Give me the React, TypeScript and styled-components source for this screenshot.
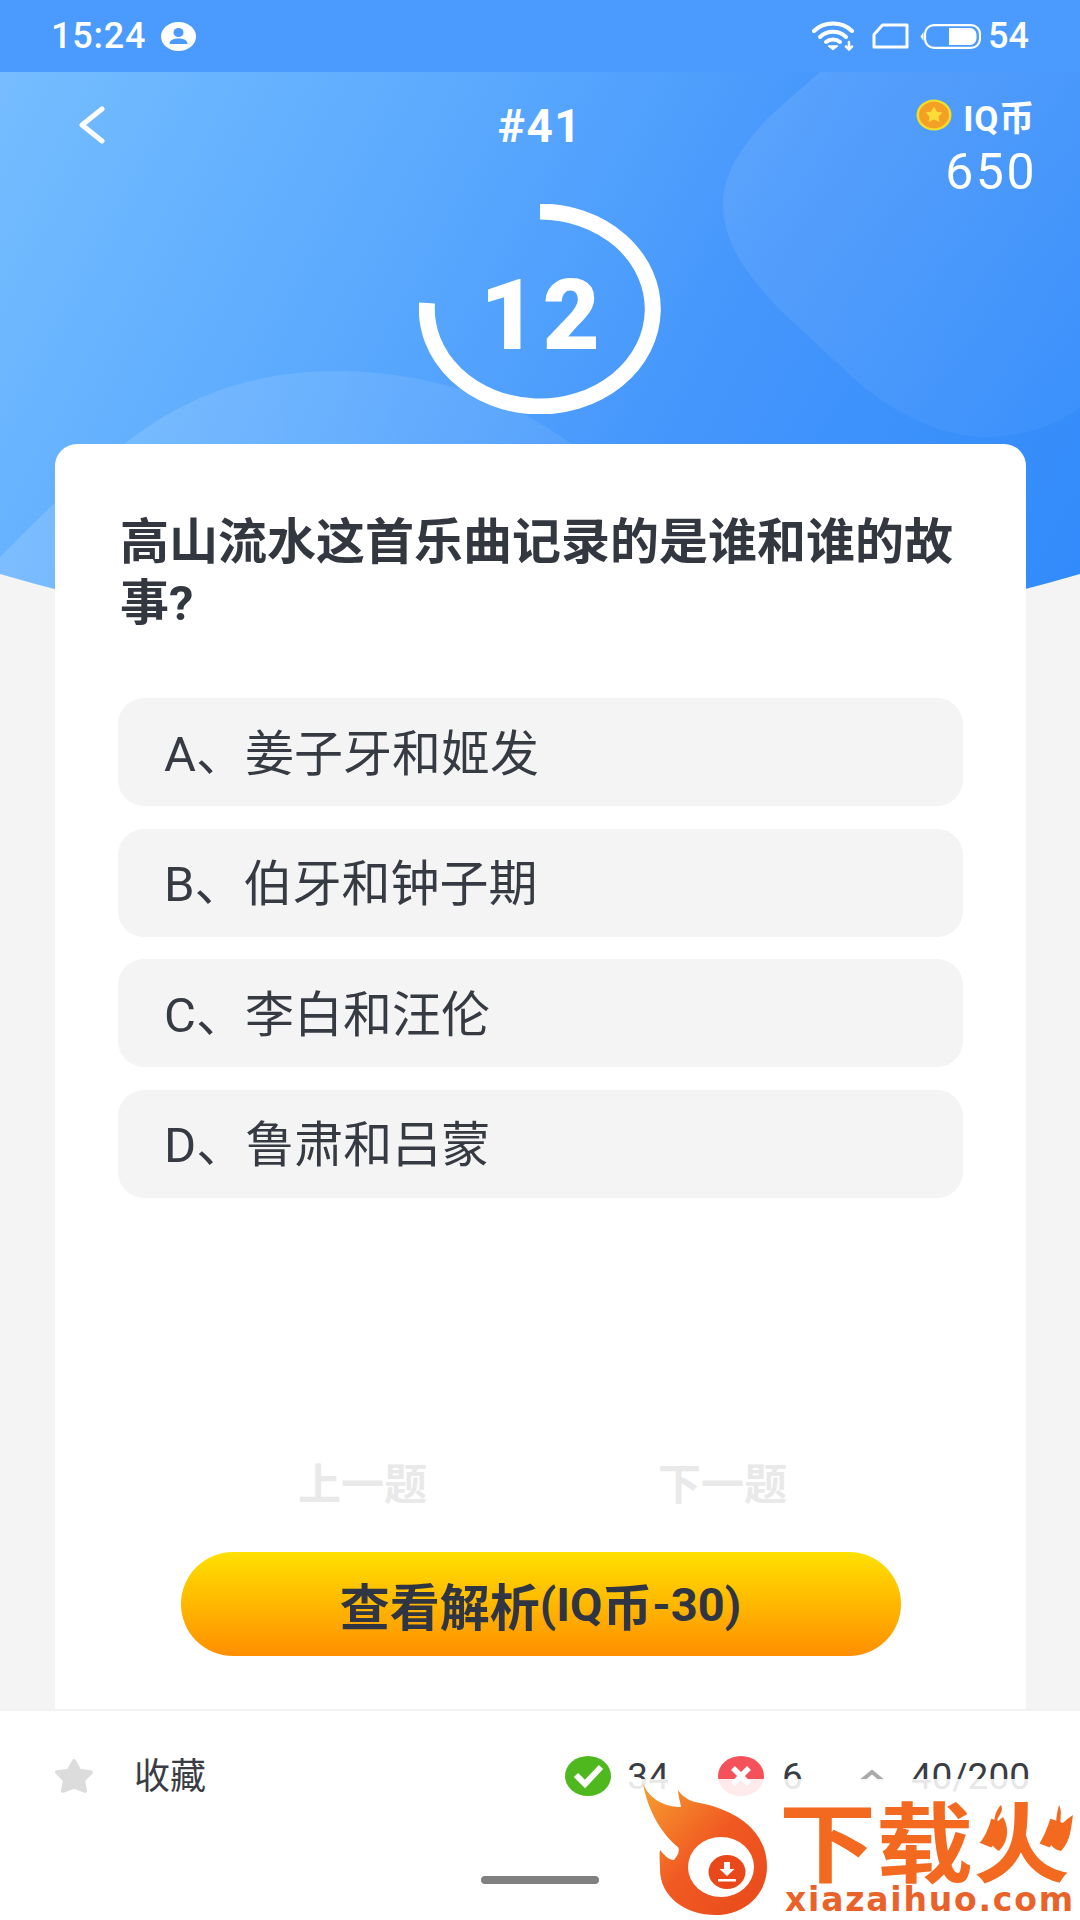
import * as React from 'react'
import styled, { createGlobalStyle } from 'styled-components'

const GlobalStyle = createGlobalStyle`
  html, body {
    margin: 0;
    padding: 0;
    background: #f4f4f4;
  }
  * {
    box-sizing: border-box;
  }
`

const fontStack = `Roboto, "Noto Sans CJK SC", sans-serif`

const Page = styled.div`
  position: relative;
  width: 1080px;
  height: 1920px;
  overflow: hidden;
  display: flex;
  flex-direction: column;
  background: #f4f4f4;
  font-family: ${fontStack};
  color: #333740;
`

const Backdrop = styled.div`
  position: absolute;
  top: 72px;
  left: 0;
  width: 1080px;
  height: 590px;
  background: linear-gradient(118deg, #75bdff 0%, #5aa9fe 35%, #4596fc 62%, #308afa 100%);
  clip-path: path('M0 0H1080V502Q540 659 0 502Z');
`

const BlobLayer = styled.svg`
  display: block;
`

const StatusBar = styled.div`
  position: relative;
  height: 72px;
  flex: none;
  display: flex;
  align-items: center;
  justify-content: space-between;
  padding: 0 51px 0 51px;
  background: #4a9bfd;
  color: #fff;
`

const StatusGroup = styled.div`
  display: flex;
  align-items: center;
`

const Clock = styled.span`
  font-size: 36px;
  font-weight: 500;
  letter-spacing: 0.8px;
  margin-right: 15px;
`

const BatteryLevel = styled.span`
  font-size: 36px;
  font-weight: 500;
  margin-left: 7px;
`

const Hero = styled.div`
  position: relative;
  height: 372px;
  flex: none;
  display: flex;
  flex-direction: column;
  align-items: center;
`

const NavRow = styled.div`
  width: 100%;
  height: 132px;
  flex: none;
  display: grid;
  grid-template-columns: 1fr auto 1fr;
  padding: 0 45px;
  color: #fff;
`

const BackIcon = styled.svg`
  margin: 34px 0 0 33px;
`

const IssueNumber = styled.div`
  margin-top: 29px;
  font-size: 46px;
  line-height: 50px;
  font-weight: 700;
  letter-spacing: 1.5px;
`

const Wallet = styled.div`
  display: flex;
  flex-direction: column;
  align-items: flex-end;
  padding-top: 26px;
`

const WalletLabel = styled.div`
  display: flex;
  align-items: center;
  gap: 11px;
  height: 34px;
  font-size: 35px;
  font-weight: 700;
  letter-spacing: 0.8px;
`

const WalletValue = styled.div`
  margin-top: 17px;
  font-size: 50px;
  line-height: 46px;
  letter-spacing: 2.5px;
  margin-right: -2px;
`

const Timer = styled.div`
  position: relative;
  width: 242px;
  height: 210px;
  flex: none;
`

const TimerValue = styled.div`
  position: absolute;
  inset: 0;
  display: flex;
  align-items: center;
  justify-content: center;
  padding: 11px 0 0 5px;
  color: #fff;
  font-size: 99px;
  font-weight: 900;
  letter-spacing: 5px;
`

const Card = styled.div`
  position: relative;
  flex: 1;
  margin: 0 54px 0 55px;
  padding: 68px 63px 53px 63px;
  display: flex;
  flex-direction: column;
  background: #fff;
  border-radius: 22px 22px 0 0;
`

const Question = styled.div`
  padding: 0 0 0 2px;
  font-size: 49px;
  line-height: 61px;
  font-weight: 700;
  color: #333740;
`

const Options = styled.div`
  margin-top: 64px;
  display: flex;
  flex-direction: column;
  gap: 22.5px;
`

const Option = styled.div`
  height: 108px;
  display: flex;
  align-items: center;
  padding: 0 0 6px 46px;
  background: #f4f4f5;
  border-radius: 26px;
  font-size: 49px;
  color: #363a42;
`

const PagerRow = styled.div`
  margin-top: auto;
  margin-bottom: 37px;
  display: flex;
  justify-content: center;
  gap: 231px;
  padding-left: 4px;
`

const PagerLabel = styled.span`
  font-size: 43px;
  line-height: 60px;
  font-weight: 700;
  color: #e9e9e9;
`

const HintButton = styled.div`
  align-self: center;
  width: 720px;
  height: 104px;
  display: flex;
  align-items: center;
  justify-content: center;
  border-radius: 52px;
  background: linear-gradient(180deg, #ffe001 0%, #ff8f00 100%);
  color: #2f3542;
  font-size: 47px;
  font-weight: 700;
`

const HintCjk = styled.span`
  font-size: 50px;
`

const BottomBar = styled.div`
  flex: none;
  height: 211px;
  padding-top: 45px;
  background: #fff;
  border-top: 2px solid #f2f2f2;
  display: flex;
  flex-direction: column;
`

const StatsRow = styled.div`
  height: 40px;
  display: flex;
  align-items: center;
  padding: 0 50px 0 53px;
  font-size: 37px;
`

const FavLabel = styled.span`
  margin: 0 auto 6px 39px;
  font-size: 36px;
  color: #3a3d44;
`

const StatItem = styled.div<{ $gap: number; $left: number }>`
  display: flex;
  align-items: center;
  gap: ${p => p.$gap}px;
  margin-left: ${p => p.$left}px;
  color: #3a3d44;
`

const HomeIndicator = styled.div`
  align-self: center;
  width: 118px;
  height: 8px;
  margin-top: 80px;
  border-radius: 4px;
  background: #808080;
`

const Watermark = styled.div`
  position: absolute;
  right: 0;
  bottom: 0;
  width: 452px;
  height: 141px;
  display: flex;
  background: rgba(255, 255, 255, 0.88);
`

const FlameLogo = styled.svg`
  flex: none;
  margin-left: 12px;
`

const Brand = styled.div`
  position: relative;
  margin-left: 9px;
  display: flex;
  flex-direction: column;
  color: #f2691f;
`

const BrandName = styled.div`
  height: 106px;
  font-family: "Noto Sans CJK SC", sans-serif;
  font-size: 97px;
  line-height: 106px;
  font-weight: 700;
  white-space: nowrap;
  transform: translateY(5px) scaleY(0.9);
  transform-origin: center 66px;
`

const BrandUrl = styled.div`
  margin: 3px 0 0 6px;
  font-family: "DejaVu Sans", sans-serif;
  font-size: 33px;
  line-height: 24px;
  font-weight: 700;
  letter-spacing: 1.8px;
  color: #e9622a;
  white-space: nowrap;
`

const BrandFlame = styled.svg<{ $left: number }>`
  position: absolute;
  top: 26px;
  left: ${p => p.$left}px;
`

const options = ['A、姜子牙和姬发', 'B、伯牙和钟子期', 'C、李白和汪伦', 'D、鲁肃和吕蒙']

export default function App() {
  return (
    <Page>
      <GlobalStyle />
      <Backdrop>
        <BlobLayer width="1080" height="590" viewBox="0 0 1080 590">
          <defs>
            <linearGradient id="blobRight" x1="0" y1="0" x2="1" y2="1">
              <stop offset="0" stopColor="#fff" stopOpacity="0.1" />
              <stop offset="1" stopColor="#fff" stopOpacity="0.03" />
            </linearGradient>
            <linearGradient id="blobLeft" x1="0" y1="0" x2="1" y2="0">
              <stop offset="0" stopColor="#fff" stopOpacity="0.14" />
              <stop offset="1" stopColor="#fff" stopOpacity="0.07" />
            </linearGradient>
          </defs>
          <path
            d="M820 0L770 44C740 75 722 105 723 133C724 175 750 205 778 236L860 312C900 345 945 365 985 365C1025 365 1060 352 1080 335V0Z"
            fill="url(#blobRight)"
          />
          <path
            d="M0 485C45 440 85 400 124 372C190 320 260 299 337 299C420 299 510 325 571 372L600 502L0 540Z"
            fill="url(#blobLeft)"
          />
        </BlobLayer>
      </Backdrop>

      <StatusBar>
        <StatusGroup>
          <Clock>15:24</Clock>
          <svg width="35" height="29" viewBox="0 0 35 29">
            <ellipse cx="17.5" cy="14.5" rx="17.5" ry="14.5" fill="#fff" />
            <ellipse cx="17.5" cy="10.5" rx="5" ry="4.5" fill="#4a9bfd" />
            <path d="M8.5 22c0-4 4-5.5 9-5.5s9 1.5 9 5.5z" fill="#4a9bfd" />
          </svg>
        </StatusGroup>
        <StatusGroup>
          <svg width="44" height="30" viewBox="0 0 44 30" fill="none" stroke="#fff" strokeWidth="4" strokeLinecap="round">
            <path d="M2 10C12 0 30 0 40 10" />
            <path d="M8 16C15 9 27 9 34 16" />
            <path d="M14 21C18 17.500 24 17.500 28 21" />
            <path d="M16.500 25L21 28.500L25.500 25Z" fill="#fff" strokeWidth="1.500" strokeLinejoin="round" />
            <path d="M37 21V28M34 25.500L37 28.500L40 25.500" strokeWidth="2.500" />
          </svg>
          <svg width="37" height="26" viewBox="0 0 37 26" fill="none" style={{ marginLeft: 16 }}>
            <path d="M10.500 2H35V24H2V11.500Z" stroke="#fff" strokeWidth="3" strokeLinejoin="round" />
          </svg>
          <svg width="61" height="25" viewBox="0 0 61 25" fill="none" style={{ marginLeft: 11 }}>
            <rect x="5" y="1.200" width="55" height="22.600" rx="9" stroke="#fff" strokeWidth="2.200" />
            <path d="M0.500 12.500L3.500 8V17Z" fill="#fff" />
            <path d="M29 4H50A6.500 6.500 0 0 1 56.500 10.500V14.500A6.500 6.500 0 0 1 50 21H29Z" fill="#fff" />
          </svg>
          <BatteryLevel>54</BatteryLevel>
        </StatusGroup>
      </StatusBar>

      <Hero>
        <NavRow>
          <BackIcon width="28" height="38" viewBox="0 0 28 38" fill="none">
            <path d="M24 3L4 19L24 35" stroke="#fff" strokeWidth="5" strokeLinecap="round" strokeLinejoin="round" />
          </BackIcon>
          <IssueNumber>#41</IssueNumber>
          <Wallet>
            <WalletLabel>
              <svg width="36" height="32" viewBox="0 0 36 32">
                <ellipse cx="18" cy="16" rx="17.500" ry="15.500" fill="#f3dd2b" />
                <ellipse cx="18" cy="16" rx="15" ry="13.200" fill="#f4a024" />
                <path d="M18 7.500L21 12.800L26.500 13.600L22.500 17.500L23.500 23L18 20.500L12.500 23L13.500 17.500L9.500 13.600L15 12.800Z" fill="#fbdc3a" strokeLinejoin="round" />
              </svg>
              <span>IQ币</span>
            </WalletLabel>
            <WalletValue>650</WalletValue>
          </Wallet>
        </NavRow>
        <Timer>
          <svg width="242" height="210" viewBox="0 0 242 210" fill="none">
            <path d="M121 7.500A113 97.500 0 1 1 8 99" stroke="#fff" strokeWidth="16" />
          </svg>
          <TimerValue>12</TimerValue>
        </Timer>
      </Hero>

      <Card>
        <Question>高山流水这首乐曲记录的是谁和谁的故事?</Question>
        <Options>
          {options.map(text => (
            <Option key={text}>{text}</Option>
          ))}
        </Options>
        <PagerRow>
          <PagerLabel>上一题</PagerLabel>
          <PagerLabel>下一题</PagerLabel>
        </PagerRow>
        <HintButton>
          <HintCjk>查看解析</HintCjk>(IQ<HintCjk>币</HintCjk>-30)
        </HintButton>
      </Card>

      <BottomBar>
        <StatsRow>
          <svg width="42" height="36" viewBox="0 0 40 34">
            <path d="M20 3L25 12L36 13.500L28.500 21L30.500 31L20 27L9.500 31L11.500 21L4 13.500L15 12Z" fill="#dcdcdc" stroke="#dcdcdc" strokeWidth="4" strokeLinejoin="round" />
          </svg>
          <FavLabel>收藏</FavLabel>
          <StatItem $gap={16} $left={0}>
            <svg width="46" height="40" viewBox="0 0 46 40">
              <ellipse cx="23" cy="20" rx="23" ry="20" fill="#4fb81f" />
              <path d="M11 19L20 28L36 11" fill="none" stroke="#fff" strokeWidth="6" />
            </svg>
            <span>34</span>
          </StatItem>
          <StatItem $gap={18} $left={49}>
            <svg width="46" height="40" viewBox="0 0 46 40">
              <ellipse cx="23" cy="20" rx="23" ry="20" fill="#f5515a" />
              <path d="M15 12L31 28M31 12L15 28" fill="none" stroke="#fff" strokeWidth="5.500" />
            </svg>
            <span>6</span>
          </StatItem>
          <StatItem $gap={26} $left={56}>
            <svg width="26" height="14" viewBox="0 0 26 14">
              <path d="M2 12L13 3L24 12" fill="none" stroke="#aaa" strokeWidth="4" />
            </svg>
            <span>40/200</span>
          </StatItem>
        </StatsRow>
        <HomeIndicator />
      </BottomBar>

      <Watermark>
        <FlameLogo width="130" height="141" viewBox="0 0 130 141">
          <defs>
            <linearGradient id="flame" x1="0" y1="0" x2="1" y2="1">
              <stop offset="0" stopColor="#f7a030" />
              <stop offset="0.5" stopColor="#f05a22" />
              <stop offset="1" stopColor="#e9481b" />
            </linearGradient>
          </defs>
          <path
            d="M3 4C8 18 22 28 41 28C40 22 38 16 38 11C42 17 48 21 55 23C85 28 127 45 127 88C127 115 105 136 76 136C45 136 20 118 20 90C20 83 19 77 20 71C24 76 29 81 34 81C38 76 40 72 38 68C25 58 8 35 3 4Z"
            fill="url(#flame)"
          />
          <ellipse cx="81" cy="88" rx="33" ry="30" fill="#fff" />
          <ellipse cx="87" cy="93" rx="18.500" ry="17" fill="#e9481b" />
          <path d="M84 83H90V90H94.500L87 97L79.500 90H84Z" fill="#fff" />
          <rect x="78" y="100" width="18" height="2.500" fill="#fff" />
        </FlameLogo>
        <Brand>
          <BrandName>下载火</BrandName>
          <BrandUrl>xiazaihuo.com</BrandUrl>
          <BrandFlame $left={208} width="22" height="46" viewBox="0 0 22 46">
            <path d="M14 0C18 8 8 12 10 20C12 14 14 14 16 12C22 22 22 36 12 46C2 40 -2 28 4 18C6 22 6 24 8 24C6 16 8 6 14 0Z" fill="#f2691f" />
          </BrandFlame>
          <BrandFlame $left={268} width="26" height="46" viewBox="0 0 26 46">
            <path d="M12 0C16 8 12 14 14 20C18 16 20 14 26 10C24 22 24 36 14 46C2 44 -2 30 6 22C8 24 8 26 10 26C8 16 10 8 12 0Z" fill="#f2691f" />
          </BrandFlame>
        </Brand>
      </Watermark>
    </Page>
  )
}
